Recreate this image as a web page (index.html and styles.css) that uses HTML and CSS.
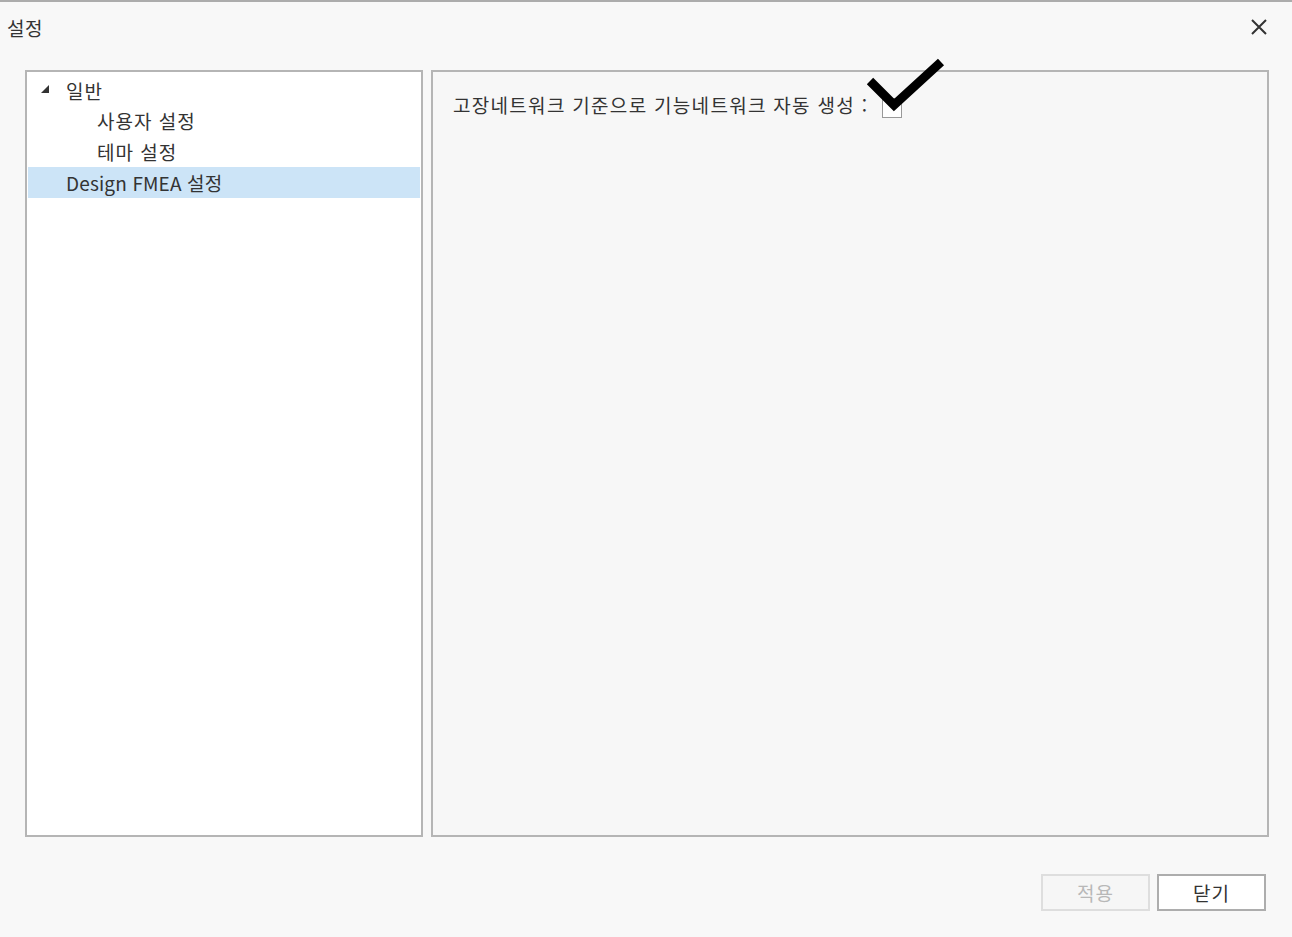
FILE: index.html
```html
<!DOCTYPE html>
<html lang="ko">
<head>
<meta charset="utf-8">
<title>설정</title>
<link rel="stylesheet" href="styles.css">
</head>
<body>
<div class="window">
  <div class="titlebar">
    <span class="title">설정</span>
    <span class="close">
      <svg width="18" height="18" viewBox="0 0 18 18"><path d="M2 2 L16 16 M16 2 L2 16" stroke="#333" stroke-width="2" fill="none"/></svg>
    </span>
  </div>
  <div class="content">
    <div class="tree">
      <div class="row root"><span class="arrow"></span><span class="ko">일반</span></div>
      <div class="row child ko">사용자 설정</div>
      <div class="row child ko">테마 설정</div>
      <div class="row selected mixed">Design FMEA 설정</div>
    </div>
    <div class="panel">
      <div class="option">
        <span class="label">고장네트워크 기준으로 기능네트워크 자동 생성 :</span>
        <span class="checkbox">
          <svg class="check" width="90" height="70" viewBox="0 0 90 70"><path d="M8 30 L32 54 L79 11" stroke="#000" stroke-width="9" fill="none" stroke-linecap="butt" stroke-linejoin="miter"/></svg>
        </span>
      </div>
    </div>
  </div>
  <div class="footer">
    <button class="btn disabled">적용</button>
    <button class="btn">닫기</button>
  </div>
</div>
</body>
</html>
```
FILE: styles.css
```css
html, body {
  margin: 0;
  padding: 0;
  background: #f8f8f8;
}
body {
  font-family: "Noto Sans CJK KR", "Noto Sans", sans-serif;
  color: #333;
  width: 1292px;
  height: 937px;
  overflow: hidden;
}
.window {
  box-sizing: border-box;
  height: 937px;
  border-top: 2px solid #acacac;
  display: flex;
  flex-direction: column;
}
.titlebar {
  height: 50px;
  display: flex;
  align-items: center;
  justify-content: space-between;
  padding: 0 24px 0 7px;
  box-sizing: border-box;
}
.title {
  font-size: 19px;
  letter-spacing: 0.5px;
  color: #333;
}
.close {
  display: flex;
  width: 18px;
  height: 18px;
}
.content {
  display: flex;
  gap: 8px;
  padding: 0 23px 0 25px;
  height: 767px;
  margin-top: 18px;
}
.tree {
  width: 398px;
  box-sizing: border-box;
  background: #fff;
  border: 2px solid #b5b5b5;
  padding: 3px 1px 0 1px;
  display: flex;
  flex-direction: column;
}
.row {
  height: 31px;
  display: flex;
  align-items: center;
  font-size: 19px;
  color: #333;
  white-space: nowrap;
}
.root {
  height: 30px;
}
.ko {
  letter-spacing: 1px;
}
.mixed {
  letter-spacing: 0.15px;
}
.root {
  padding-left: 13px;
}
.arrow {
  width: 0;
  height: 0;
  border-left: 8px solid transparent;
  border-bottom: 8px solid #333;
  margin-right: 17px;
  margin-top: -3px;
}
.child {
  padding-left: 69px;
}
.selected {
  background: #cce4f7;
  padding-left: 38px;
}
.panel {
  flex: 1;
  box-sizing: border-box;
  background: #f7f7f7;
  border: 2px solid #b5b5b5;
  padding: 19px 20px;
}
.option {
  display: flex;
  align-items: center;
  gap: 14px;
}
.label {
  font-size: 19px;
  letter-spacing: 1.3px;
  color: #333;
  white-space: nowrap;
}
.checkbox {
  position: relative;
  width: 18px;
  height: 18px;
  border: 1px solid #999;
  background: #fff;
  margin-top: 6px;
}
.check {
  position: absolute;
  left: -21px;
  top: -48px;
}
.footer {
  display: flex;
  justify-content: flex-end;
  gap: 7px;
  padding: 0 26px 0 0;
  margin-top: 37px;
}
.btn {
  width: 109px;
  height: 37px;
  box-sizing: border-box;
  font-family: "Noto Sans CJK KR", "Noto Sans", sans-serif;
  font-size: 19px;
  letter-spacing: 1px;
  background: #fff;
  border: 2px solid #adadad;
  color: #333;
  padding: 0;
}
.btn.disabled {
  background: #f6f6f6;
  border-color: #dedede;
  color: #b8b8b8;
}
```
